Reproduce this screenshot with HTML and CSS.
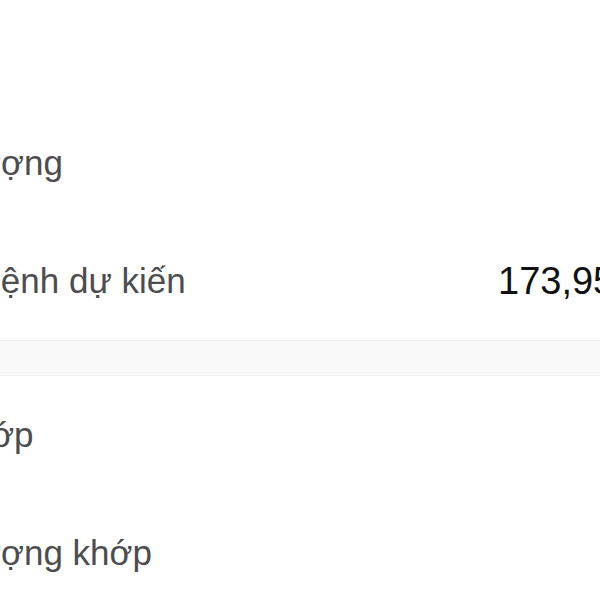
FILE: index.html
```html
<!DOCTYPE html>
<html lang="vi">
<head>
    <meta charset="UTF-8">
    <meta name="viewport" content="width=device-width, initial-scale=1.0">
    <title>Chi tiết lệnh</title>
    <link rel="stylesheet" href="styles.css">
</head>
<body>

<div class="sheet">
    <!-- Thông tin lệnh -->
    <section class="group first">
        <div class="row">
            <span class="label">Khối lượng</span>
            <span class="value"></span>
        </div>
        <div class="row">
            <span class="label">Giá trị lệnh dự kiến</span>
            <span class="value">173,950,000</span>
        </div>
    </section>

    <div class="divider"></div>

    <!-- Thông tin khớp -->
    <section class="group">
        <div class="row">
            <span class="label">Giá khớp</span>
            <span class="value"></span>
        </div>
        <div class="row">
            <span class="label">Khối lượng khớp</span>
            <span class="value"></span>
        </div>
    </section>
</div>

</body>
</html>
```

FILE: styles.css
```css
html, body {
    margin: 0;
    padding: 0;
    background-color: #fff;
    overflow: hidden;
}
body {
    font-family: "Liberation Sans", Arial, sans-serif;
    width: 600px;
    height: 600px;
}
.sheet {
    margin-left: -110px;
    width: 900px;
}
.group.first {
    padding-top: 104px;
}
.row {
    display: grid;
    grid-template-columns: 608px auto;
    align-items: center;
    height: 118px;
    font-size: 35px;
}
.label {
    color: #4d4d4f;
    white-space: nowrap;
}
.value {
    color: #111;
    font-size: 38px;
    white-space: nowrap;
}
.divider {
    height: 34px;
    background-color: #f9f9f9;
    border-top: 1px solid #f0f0f0;
    border-bottom: 1px solid #f2f2f2;
}
```
